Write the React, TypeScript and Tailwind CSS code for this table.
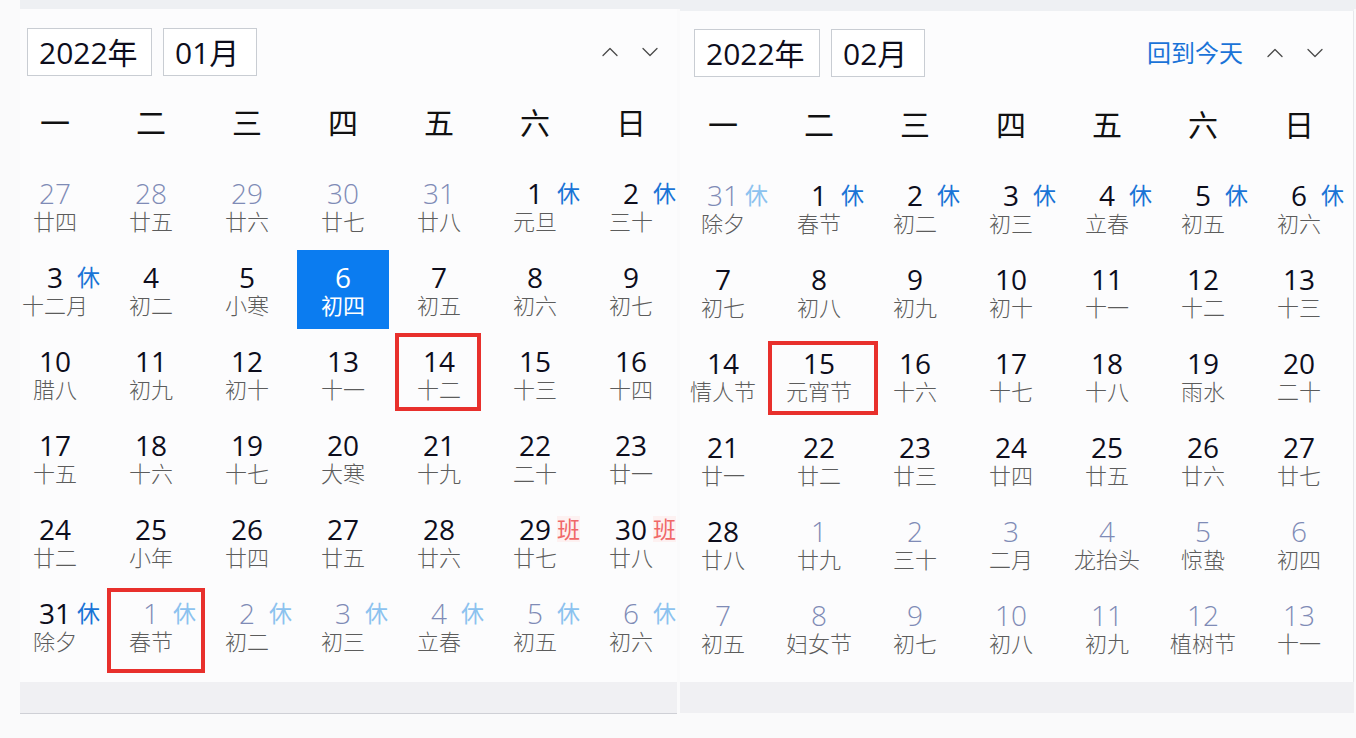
import React from "react";

type Cell = { d: string; l: string; o?: boolean; b?: "休" | "班"; s?: boolean };

const c = (d: string, l: string, extra: Partial<Cell> = {}): Cell => ({ d, l, ...extra });

const jan: Cell[] = [
  c("27", "廿四", { o: true }), c("28", "廿五", { o: true }), c("29", "廿六", { o: true }), c("30", "廿七", { o: true }), c("31", "廿八", { o: true }), c("1", "元旦", { b: "休" }), c("2", "三十", { b: "休" }),
  c("3", "十二月", { b: "休" }), c("4", "初二"), c("5", "小寒"), c("6", "初四", { s: true }), c("7", "初五"), c("8", "初六"), c("9", "初七"),
  c("10", "腊八"), c("11", "初九"), c("12", "初十"), c("13", "十一"), c("14", "十二"), c("15", "十三"), c("16", "十四"),
  c("17", "十五"), c("18", "十六"), c("19", "十七"), c("20", "大寒"), c("21", "十九"), c("22", "二十"), c("23", "廿一"),
  c("24", "廿二"), c("25", "小年"), c("26", "廿四"), c("27", "廿五"), c("28", "廿六"), c("29", "廿七", { b: "班" }), c("30", "廿八", { b: "班" }),
  c("31", "除夕", { b: "休" }), c("1", "春节", { o: true, b: "休" }), c("2", "初二", { o: true, b: "休" }), c("3", "初三", { o: true, b: "休" }), c("4", "立春", { o: true, b: "休" }), c("5", "初五", { o: true, b: "休" }), c("6", "初六", { o: true, b: "休" }),
];

const feb: Cell[] = [
  c("31", "除夕", { o: true, b: "休" }), c("1", "春节", { b: "休" }), c("2", "初二", { b: "休" }), c("3", "初三", { b: "休" }), c("4", "立春", { b: "休" }), c("5", "初五", { b: "休" }), c("6", "初六", { b: "休" }),
  c("7", "初七"), c("8", "初八"), c("9", "初九"), c("10", "初十"), c("11", "十一"), c("12", "十二"), c("13", "十三"),
  c("14", "情人节"), c("15", "元宵节"), c("16", "十六"), c("17", "十七"), c("18", "十八"), c("19", "雨水"), c("20", "二十"),
  c("21", "廿一"), c("22", "廿二"), c("23", "廿三"), c("24", "廿四"), c("25", "廿五"), c("26", "廿六"), c("27", "廿七"),
  c("28", "廿八"), c("1", "廿九", { o: true }), c("2", "三十", { o: true }), c("3", "二月", { o: true }), c("4", "龙抬头", { o: true }), c("5", "惊蛰", { o: true }), c("6", "初四", { o: true }),
  c("7", "初五", { o: true }), c("8", "妇女节", { o: true }), c("9", "初七", { o: true }), c("10", "初八", { o: true }), c("11", "初九", { o: true }), c("12", "植树节", { o: true }), c("13", "十一", { o: true }),
];

const weekdays = ["一", "二", "三", "四", "五", "六", "日"];

function Chevron({ up }: { up?: boolean }) {
  return (
    <svg width="16" height="10" viewBox="0 0 16 10" fill="none">
      <polyline
        points={up ? "1,8.5 8,1.5 15,8.5" : "1,1.5 8,8.5 15,1.5"}
        stroke="#4a4a4a"
        strokeWidth="1.3"
        strokeLinecap="round"
        strokeLinejoin="round"
      />
    </svg>
  );
}

function DayCell({ cell }: { cell: Cell }) {
  const numColor = cell.s ? "text-white" : cell.o ? "text-[#7f8bb6] font-light" : "text-[#0d0d1c]";
  const lunarColor = cell.s ? "text-white" : "text-[#5c5c5c] font-light";
  let badgeCls = "";
  if (cell.b === "班") badgeCls = "text-[#f06868] bg-[#fdf1f1]";
  else if (cell.b === "休") badgeCls = cell.o ? "text-[#8cc2ef]" : "text-[#1a74d6]";
  return (
    <div className="h-[84px] flex justify-center">
      <div className={`relative mt-[2px] w-[92px] h-[79px] flex flex-col items-center pt-[14px] ${cell.s ? "bg-[#0b7cf0]" : ""}`}>
        <div className={`text-[28px] leading-[26px] ${numColor}`}>{cell.d}</div>
        <div className={`mt-[2px] text-[22px] leading-[26px] whitespace-nowrap ${lunarColor}`}>{cell.l}</div>
        {cell.b && (
          <div className={`absolute top-[14px] left-[68px] text-[23px] leading-[26px] ${badgeCls}`}>{cell.b}</div>
        )}
      </div>
    </div>
  );
}

function Calendar({
  year,
  month,
  cells,
  right,
}: {
  year: string;
  month: string;
  cells: Cell[];
  right?: boolean;
}) {
  return (
    <div className="flex flex-col">
      <div className={`flex items-center justify-between ${right ? "mt-[18px] pl-[14px] pr-[30px]" : "mt-[19px] pl-[7px] pr-[19px]"}`}>
        <div className="flex gap-[11px]">
          <div className={`h-[48px] ${right ? "w-[126px]" : "w-[125px]"} border border-[#c9cdd3] bg-white flex items-center pl-[11px] text-[30px] text-[#0d0d1c]`}>
            {year}
          </div>
          <div className="h-[48px] w-[94px] border border-[#c9cdd3] bg-white flex items-center pl-[11px] text-[30px] text-[#0d0d1c]">
            {month}
          </div>
        </div>
        <div className="flex items-center">
          {right && <span className="text-[24px] text-[#1a73d8] mr-[24px] leading-[28px]">回到今天</span>}
          <Chevron up />
          <span className="w-[24px]" />
          <Chevron />
        </div>
      </div>
      <div className={`w-[672px] ${right ? "ml-[-5px] mt-[25px]" : "ml-[-13px] mt-[24px]"}`}>
        <div className="grid grid-cols-7 h-[46px] items-center">
          {weekdays.map((w) => (
            <div key={w} className="text-center text-[30px] leading-[46px] text-[#111]">
              {w}
            </div>
          ))}
        </div>
        <div className="grid grid-cols-7 mt-[18px]">
          {cells.map((cell, i) => (
            <DayCell key={i} cell={cell} />
          ))}
        </div>
      </div>
    </div>
  );
}

export default function App() {
  return (
    <div className="relative w-[1356px] h-[738px] overflow-hidden bg-[#fafafb] font-['Open_Sans','Noto_Sans_CJK_SC',sans-serif]">
      <div className="ml-[20px] h-[9px] bg-[#eef0f3]" />
      <div className="flex">
        <div className="ml-[20px] w-[657px] flex flex-col">
          <div className="h-[673px] bg-[#fcfcfd]">
            <Calendar year="2022年" month="01月" cells={jan} />
          </div>
          <div className="h-[32px] bg-[#f0f0f3] border-b border-[#cfd0d6]" />
        </div>
        <div className="ml-[3px] w-[674px] flex flex-col">
          <div className="h-[2px] bg-[#eef0f3]" />
          <div className="h-[671px] bg-[#fcfcfd] border-r border-[#e6e7eb]">
            <Calendar year="2022年" month="02月" cells={feb} right />
          </div>
          <div className="h-[31px] bg-[#f0f0f3]" />
        </div>
      </div>
      <div className="absolute left-[395px] top-[333px] w-[86px] h-[78px] border-[4px] border-[#e8302c]" />
      <div className="absolute left-[107px] top-[588px] w-[98px] h-[85px] border-[4px] border-[#e8302c]" />
      <div className="absolute left-[768px] top-[341px] w-[110px] h-[74px] border-[4px] border-[#e8302c]" />
    </div>
  );
}
